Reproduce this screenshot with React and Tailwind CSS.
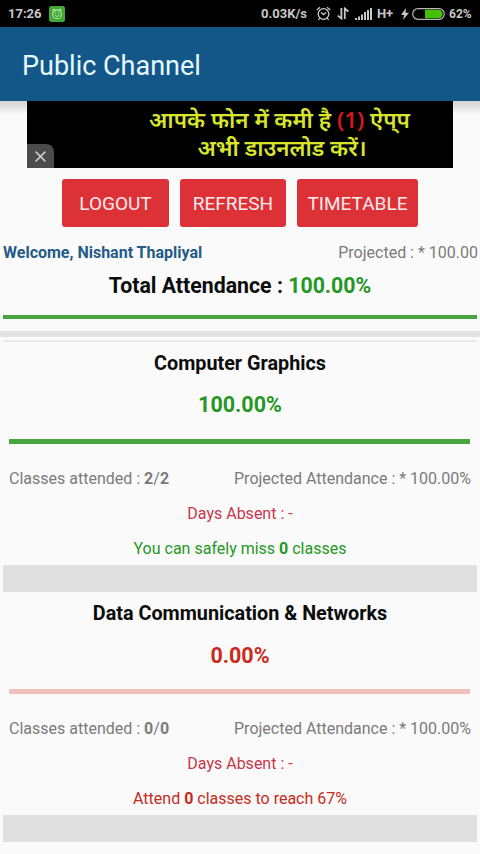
import React from 'react';
import clsx from 'clsx';

const subjects = [
  {
    id: 1,
    name: 'Computer Graphics',
    percent: '100.00%',
    attended: '2',
    total: '2',
    projected: '* 100.00%',
    absent: '-',
    safe: true,
  },
  {
    id: 2,
    name: 'Data Communication & Networks',
    percent: '0.00%',
    attended: '0',
    total: '0',
    projected: '* 100.00%',
    absent: '-',
    safe: false,
  },
];

const StatusBar = () => (
  <div className="flex h-[27px] items-center bg-black pl-2 pr-2 text-[12px] font-bold text-[#c8c8c8]">
    <span className="w-[35px] text-[13px]">17:26</span>
    <svg className="ml-[6px]" width="16" height="16" viewBox="0 0 16 16">
      <rect width="16" height="16" rx="2.5" fill="#43a83c" />
      <circle cx="8" cy="8.4" r="4.3" fill="none" stroke="#b5ec9e" strokeWidth="1.1" />
      <path d="M3.6 5.2 4.6 3l2 1.2M12.4 5.2 11.4 3l-2 1.2M6 7.2h1.2M8.8 7.2H10M6 9.2c.8 1.6 3.2 1.6 4 0" fill="none" stroke="#b5ec9e" strokeWidth="1" />
    </svg>
    <div className="flex-1" />
    <span className="w-[47px] text-[13px] whitespace-nowrap">0.03K/s</span>
    <svg className="ml-[8px]" width="15" height="15" viewBox="0 0 15 15" fill="none" stroke="#c8c8c8" strokeWidth="1.3">
      <circle cx="7.5" cy="8" r="5.3" />
      <path d="M.8 4 4 1.2M14.2 4 11 1.2M3.8 12l-1.4 2M11.2 12l1.4 2M5 6.6l2.5 2 2.6-2" />
    </svg>
    <svg className="ml-[6px]" width="12" height="13" viewBox="0 0 12 13" fill="none" stroke="#c8c8c8" strokeWidth="1.8">
      <path d="M4.4 1v10.5L.8 8.6M7.8 12V1.5l3.6 3" />
    </svg>
    <svg className="ml-[6px]" width="17" height="12" viewBox="0 0 17 12" fill="#c8c8c8">
      <rect x="0" y="10" width="2" height="2" />
      <rect x="3" y="8.5" width="2" height="3.5" />
      <rect x="6" y="6.5" width="2" height="5.5" />
      <rect x="9" y="4" width="2" height="8" />
      <rect x="12" y="2" width="2" height="10" />
      <rect x="15" y="0" width="2" height="12" />
    </svg>
    <span className="ml-[5px] w-[17px] text-[13px] tracking-[-0.3px]">H+</span>
    <svg className="ml-[7px]" width="8" height="12" viewBox="0 0 8 12" fill="#c8c8c8">
      <path d="M5 0 0 7h3.2L2 12l6-7.2H4.6z" />
    </svg>
    <svg className="ml-[3px]" width="33" height="12" viewBox="0 0 33 12">
      <rect x=".7" y=".7" width="31.6" height="10.6" rx="5.3" fill="none" stroke="#b9b9b9" strokeWidth="1.2" />
      <path d="M13 1.8h13.5a4.2 4.2 0 0 1 0 8.4H13z" fill="#43c004" />
    </svg>
    <span className="ml-[4px] w-[23px] text-[12px]">62%</span>
  </div>
);

const AdBanner = () => (
  <div className="flex bg-gradient-to-b from-[#d2d2d2] to-[#fafafa] to-[14px] px-[27px]">
    <div className="relative h-[67px] w-[426px] bg-black text-center font-['Noto_Sans','Noto_Sans_Devanagari',sans-serif] text-[22.4px] font-semibold leading-[28px] text-[#d8e52c]">
      <p className="ml-[79px] mt-[5px] whitespace-nowrap">
        आपके फोन में कमी है <span className="text-[#d3191c]">(1)</span> ऐप्‌प
      </p>
      <p className="ml-[84px] whitespace-nowrap">अभी डाउनलोड करें।</p>
      <button className="absolute bottom-0 left-0 flex h-6 w-[27px] items-center justify-center rounded-tr-[8px] bg-[#4b4b4b]">
        <svg width="11" height="11" viewBox="0 0 11 11" stroke="#c9c9c9" strokeWidth="1.6">
          <path d="m.6.6 9.8 9.8M10.4.6.6 10.4" />
        </svg>
      </button>
    </div>
  </div>
);

const ActionButton = ({ label, className }) => (
  <button className={clsx('h-12 rounded-[3px] bg-[#dc3237] pt-[2px] text-center text-[19px] text-[#fdeaea]', className)}>
    {label}
  </button>
);

const SubjectCard = ({ subject }) => {
  const tone = subject.safe ? 'text-[#259724]' : 'text-[#c82a20]';

  return (
    <div className="px-[3px]">
      <div className="h-[223.5px] px-[6px] pt-[10.8px]">
        <h2 className="text-center text-[19.8px] font-bold leading-6 text-[#0c0c0c]">{subject.name}</h2>
        <p className={clsx('mt-[16.5px] text-center text-[21.5px] font-bold leading-[25px]', tone)}>{subject.percent}</p>
        <div className={clsx('mt-[21.7px] h-[5px] w-[461px]', subject.safe ? 'bg-[#48a43c]' : 'bg-[#f2bfba]')} />
        <div className="mt-[24.7px] flex justify-between text-[16px] leading-5 text-[#7b7b7b]">
          <span>
            Classes attended : <b>{subject.attended}</b>/<b>{subject.total}</b>
          </span>
          <span>Projected Attendance : {subject.projected}</span>
        </div>
        <p className="mt-[15px] text-center text-[16px] leading-5 text-[#c8364a]">Days Absent : {subject.absent}</p>
        <p className={clsx('mt-[15px] text-center text-[16px] leading-5', tone)}>
          {subject.safe ? (
            <>You can safely miss <b>0</b> classes</>
          ) : (
            <>Attend <b>0</b> classes to reach 67%</>
          )}
        </p>
      </div>
      <div className="h-[27px] bg-[#e0e0e0]" />
    </div>
  );
};

const App = () => {
  return (
    <div className="h-[854px] w-[480px] overflow-hidden bg-[#fafafa] font-['Roboto',sans-serif]">
      <StatusBar />
      <header className="flex h-[74px] items-center bg-[#135788] pl-[22px] pt-[4px]">
        <h1 className="text-[27px] leading-8 text-[#e6f8ff]">Public Channel</h1>
      </header>
      <AdBanner />
      <div className="mt-[11px] flex gap-[11px] pl-[62px]">
        <ActionButton label="LOGOUT" className="w-[107px]" />
        <ActionButton label="REFRESH" className="w-[106px]" />
        <ActionButton label="TIMETABLE" className="w-[121px]" />
      </div>
      <div className="mt-[16px] flex justify-between pl-[3px] pr-[2px] text-[16px] leading-5">
        <span className="font-bold text-[#245a87]">Welcome, Nishant Thapliyal</span>
        <span className="text-[#7b7b7b]">Projected : * 100.00</span>
      </div>
      <p className="mt-[10px] text-center text-[21.3px] font-bold leading-[26px] text-[#0c0c0c]">
        Total Attendance : <span className="text-[#259724]">100.00%</span>
      </p>
      <div className="mx-[3px] mt-[16px] h-[4px] bg-[#48a43c]" />
      <div className="mt-[12px] h-[6px] bg-[#e1e2e1]" />
      <div className="mx-[3px] mt-[3px] h-[2px] bg-[#ebebeb]" />
      <div className="-mt-px">
        {subjects.map((subject) => (
          <SubjectCard key={subject.id} subject={subject} />
        ))}
      </div>
    </div>
  );
};

export default App;
